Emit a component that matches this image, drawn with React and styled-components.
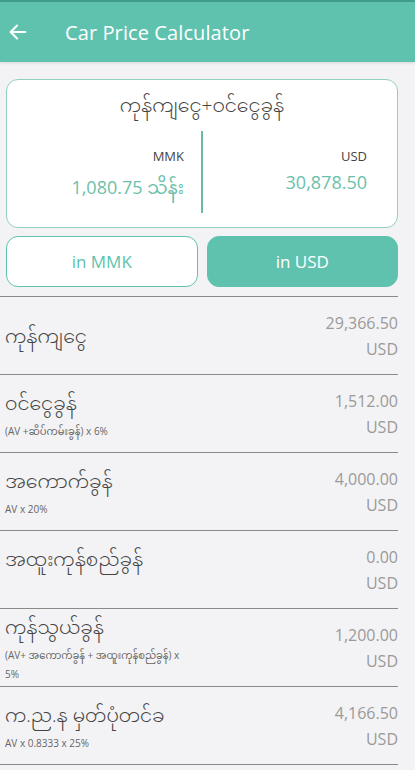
import React, { useState } from "react";
import styled, { createGlobalStyle } from "styled-components";

const teal = "#5fc2ae";
const font = `"Open Sans", "Noto Sans", "Noto Sans Myanmar", "Padauk", sans-serif`;

const GlobalStyle = createGlobalStyle`
  html, body {
    margin: 0;
    padding: 0;
    background: #f3f3f5;
    font-family: ${font};
  }
`;

const Page = styled.div`
  width: 415px;
  height: 770px;
  overflow: hidden;
  background: #f3f3f5;
`;

const AppBar = styled.header`
  height: 62px;
  background: ${teal};
  border-top: 2px solid #3f9e8a;
  box-sizing: border-box;
  display: flex;
  align-items: center;
  color: #fff;
  box-shadow: 0 1px 3px rgba(0, 0, 0, 0.12);
`;

const BackButton = styled.div`
  width: 65px;
  display: flex;
  align-items: center;
  padding-left: 7px;
  box-sizing: border-box;
`;

const Title = styled.h1`
  margin: 0;
  font-size: 20px;
  font-weight: 400;
  letter-spacing: 0.1px;
`;

const Body = styled.main`
  padding: 17px 17px 0 6px;
`;

const Summary = styled.section`
  background: #fff;
  border: 1.5px solid #8fd0c0;
  border-radius: 12px;
  height: 149px;
  box-sizing: border-box;
  display: flex;
  flex-direction: column;
  align-items: center;
`;

const SummaryTitle = styled.div`
  font-size: 19px;
  font-weight: 300;
  color: #444;
  margin-top: 10px;
  line-height: 30px;
`;

const Columns = styled.div`
  display: grid;
  grid-template-columns: 194px 1fr;
  width: 100%;
  margin-top: 11px;
`;

const Column = styled.div`
  display: flex;
  flex-direction: column;
  align-items: flex-end;
  padding-top: 16px;
  box-sizing: border-box;
  height: 82px;
  border-left: ${(p) => (p.$divider ? "2px solid #6bb8a6" : "none")};
  padding-right: ${(p) => (p.$divider ? "30px" : "17px")};
`;

const Currency = styled.div`
  font-size: 13px;
  color: #444;
`;

const Amount = styled.div`
  font-size: 18px;
  color: #6cbfaa;
  margin-top: 5px;
`;

const Toggles = styled.div`
  display: flex;
  gap: 9px;
  margin-top: 8px;
`;

const Toggle = styled.button`
  flex: 1;
  height: 51px;
  border-radius: 12px;
  border: 1.5px solid ${teal};
  background: ${(p) => (p.$active ? teal : "#fff")};
  color: ${(p) => (p.$active ? "#fff" : teal)};
  font-family: ${font};
  font-size: 17px;
  cursor: pointer;
`;

const List = styled.div`
  margin: 9px 17px 0 0;
  border-top: 1.5px solid #8a8a8a;
`;

const Row = styled.div`
  height: 78px;
  box-sizing: border-box;
  border-bottom: 1.5px solid #8a8a8a;
  display: flex;
  align-items: center;
  justify-content: space-between;
  padding: 0 0 0 5px;
`;

const Label = styled.div`
  display: flex;
  flex-direction: column;
  max-width: 190px;
`;

const Name = styled.div`
  font-size: 19px;
  font-weight: 300;
  color: #444;
  line-height: 32px;
  white-space: nowrap;
`;

const Formula = styled.div`
  font-size: 10px;
  color: #666;
  line-height: 19px;
  min-height: 19px;
  margin-top: 3px;
`;

const Value = styled.div`
  text-align: right;
  color: #9a9a9a;
  font-size: 16px;
  line-height: 26px;
`;

const ArrowLeft = () => (
  <svg width="22" height="22" viewBox="0 0 24 24" fill="none" stroke="#fff" strokeWidth="2.2" strokeLinecap="round" strokeLinejoin="round">
    <path d="M20 12H4" />
    <path d="M11 5l-7 7 7 7" />
  </svg>
);

const rows = [
  { name: "ကုန်ကျငွေ", value: "29,366.50", noFormula: true },
  { name: "ဝင်ငွေခွန်", formula: "(AV +ဆိပ်ကမ်းခွန်) x 6%", value: "1,512.00" },
  { name: "အကောက်ခွန်", formula: "AV x 20%", value: "4,000.00" },
  { name: "အထူးကုန်စည်ခွန်", formula: "", value: "0.00" },
  { name: "ကုန်သွယ်ခွန်", formula: "(AV+ အကောက်ခွန် + အထူးကုန်စည်ခွန်) x 5%", value: "1,200.00" },
  { name: "က.ည.န မှတ်ပုံတင်ခ", formula: "AV x 0.8333 x 25%", value: "4,166.50" },
];

export default function App() {
  const [unit, setUnit] = useState("USD");
  return (
    <Page>
      <GlobalStyle />
      <AppBar>
        <BackButton>
          <ArrowLeft />
        </BackButton>
        <Title>Car Price Calculator</Title>
      </AppBar>
      <Body>
        <Summary>
          <SummaryTitle>ကုန်ကျငွေ+ဝင်ငွေခွန်</SummaryTitle>
          <Columns>
            <Column>
              <Currency>MMK</Currency>
              <Amount>1,080.75 သိန်း</Amount>
            </Column>
            <Column $divider>
              <Currency>USD</Currency>
              <Amount>30,878.50</Amount>
            </Column>
          </Columns>
        </Summary>
        <Toggles>
          <Toggle $active={unit === "MMK"} onClick={() => setUnit("MMK")}>in MMK</Toggle>
          <Toggle $active={unit === "USD"} onClick={() => setUnit("USD")}>in USD</Toggle>
        </Toggles>
      </Body>
      <List>
        {rows.map((r) => (
          <Row key={r.name}>
            <Label>
              <Name>{r.name}</Name>
              {!r.noFormula && <Formula>{r.formula}</Formula>}
            </Label>
            <Value>
              {r.value}
              <br />
              {unit}
            </Value>
          </Row>
        ))}
      </List>
    </Page>
  );
}
